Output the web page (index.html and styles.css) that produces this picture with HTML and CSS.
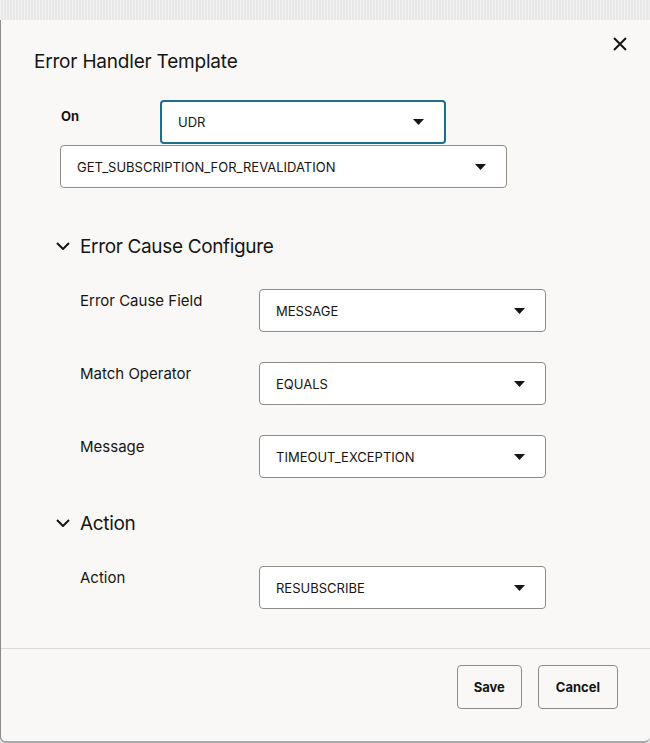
FILE: index.html
```html
<!DOCTYPE html>
<html lang="en">
<head>
<meta charset="utf-8">
<title>Error Handler Template</title>
<link rel="stylesheet" href="styles.css">
</head>
<body>
<div class="backdrop"></div>
<div class="dialog">
  <header class="dialog-header">
    <h1 class="dialog-title">Error Handler Template</h1>
    <button class="close-btn" aria-label="Close">
      <svg width="16" height="16" viewBox="0 0 16 16"><path d="M2 2L14 14M14 2L2 14" stroke="#161513" stroke-width="2" fill="none"/></svg>
    </button>
  </header>
  <div class="dialog-body">
    <div class="on-row">
      <span class="on-label">On</span>
      <div class="select select-focus select-udr">
        <span class="select-value">UDR</span>
        <svg class="caret" width="11" height="6" viewBox="0 0 11 6"><path d="M0 0H11L5.5 6Z" fill="#161513"/></svg>
      </div>
    </div>
    <div class="select select-op">
      <span class="select-value">GET_SUBSCRIPTION_FOR_REVALIDATION</span>
      <svg class="caret" width="11" height="6" viewBox="0 0 11 6"><path d="M0 0H11L5.5 6Z" fill="#161513"/></svg>
    </div>

    <section class="section section-cause">
      <div class="section-head">
        <svg class="chevron" width="14" height="8" viewBox="0 0 14 8"><path d="M1 1L7 7L13 1" stroke="#161513" stroke-width="2" fill="none"/></svg>
        <h2 class="section-title">Error Cause Configure</h2>
      </div>
      <div class="field-row">
        <span class="field-label">Error Cause Field</span>
        <div class="select select-field">
          <span class="select-value">MESSAGE</span>
          <svg class="caret" width="11" height="6" viewBox="0 0 11 6"><path d="M0 0H11L5.5 6Z" fill="#161513"/></svg>
        </div>
      </div>
      <div class="field-row">
        <span class="field-label">Match Operator</span>
        <div class="select select-field">
          <span class="select-value">EQUALS</span>
          <svg class="caret" width="11" height="6" viewBox="0 0 11 6"><path d="M0 0H11L5.5 6Z" fill="#161513"/></svg>
        </div>
      </div>
      <div class="field-row">
        <span class="field-label">Message</span>
        <div class="select select-field">
          <span class="select-value">TIMEOUT_EXCEPTION</span>
          <svg class="caret" width="11" height="6" viewBox="0 0 11 6"><path d="M0 0H11L5.5 6Z" fill="#161513"/></svg>
        </div>
      </div>
    </section>

    <section class="section section-action">
      <div class="section-head">
        <svg class="chevron" width="14" height="8" viewBox="0 0 14 8"><path d="M1 1L7 7L13 1" stroke="#161513" stroke-width="2" fill="none"/></svg>
        <h2 class="section-title">Action</h2>
      </div>
      <div class="field-row">
        <span class="field-label">Action</span>
        <div class="select select-field">
          <span class="select-value">RESUBSCRIBE</span>
          <svg class="caret" width="11" height="6" viewBox="0 0 11 6"><path d="M0 0H11L5.5 6Z" fill="#161513"/></svg>
        </div>
      </div>
    </section>
  </div>
  <footer class="dialog-footer">
    <button class="btn btn-save">Save</button>
    <button class="btn">Cancel</button>
  </footer>
</div>
</body>
</html>
```
FILE: styles.css
```css
* { box-sizing: border-box; }
html, body { margin: 0; padding: 0; }
body {
  width: 650px;
  height: 743px;
  overflow: hidden;
  background: #e4e4e4;
  font-family: Inter, "Noto Sans", "Liberation Sans", sans-serif;
  color: #161513;
}
.backdrop {
  height: 20px;
  background-color: #e8e8e8;
  background-image: repeating-linear-gradient(90deg, rgba(255,255,255,0.45) 0 1px, transparent 1px 3px);
}
.dialog {
  height: 723px;
  background: #f9f8f6;
  border-left: 1px solid #8a8a8a;
  border-bottom: 2px solid #a9a9a9;
  border-bottom-left-radius: 6px;
  border-bottom-right-radius: 6px;
  display: flex;
  flex-direction: column;
}
.dialog-header {
  display: flex;
  justify-content: space-between;
  align-items: flex-start;
  padding: 16px 22px 0 33px;
}
.dialog-title {
  margin: 9px 0 0 0;
  font-size: 19px;
  font-weight: 400;
  line-height: 34px;
  letter-spacing: -0.2px;
}
.close-btn {
  border: 0;
  background: transparent;
  padding: 0;
  width: 16px;
  height: 16px;
  display: flex;
}
.dialog-body {
  flex: 1;
  padding: 21px 0 0 0;
}
.on-row {
  display: flex;
  align-items: flex-start;
  margin-left: 60px;
}
.on-label {
  width: 99px;
  font-size: 13px;
  font-weight: 700;
  margin-top: 8px;
}
.select {
  display: flex;
  align-items: center;
  justify-content: space-between;
  background: #fff;
  border: 1px solid #8f8c88;
  border-radius: 4px;
  font-size: 13px;
}
.select-focus {
  border: 2px solid #1e6f8c;
}
.select-udr {
  width: 286px;
  height: 44px;
  padding: 0 20px 0 16px;
}
.select-op {
  width: 447px;
  height: 43px;
  margin: 1px 0 0 59px;
  padding: 0 20px 0 16px;
}
.section { margin-left: 55px; }
.section-cause { margin-top: 46px; }
.section-action { margin-top: 33px; }
.section-head {
  display: flex;
  align-items: center;
  height: 24px;
}
.chevron { margin-right: 10px; }
.section-title {
  margin: 0;
  font-size: 19px;
  font-weight: 400;
  letter-spacing: -0.35px;
}
.field-row {
  display: flex;
  align-items: flex-start;
  margin-left: 24px;
  margin-top: 31px;
}
.field-row + .field-row { margin-top: 30px; }
.field-label {
  width: 179px;
  font-size: 15px;
  margin-top: 2px;
}
.select-field {
  width: 287px;
  height: 43px;
  padding: 0 20px 0 16px;
}
.dialog-footer {
  border-top: 1px solid #dcdad7;
  height: 93px;
  display: flex;
  justify-content: flex-end;
  align-items: flex-start;
  gap: 16px;
  padding: 16px 32px 0 0;
}
.btn {
  font-family: inherit;
  font-size: 13px;
  font-weight: 700;
  color: #161513;
  background: #f9f8f6;
  border: 1px solid #8f8c88;
  border-radius: 4px;
  height: 44px;
  padding: 0 17px;
}
.btn-save { padding: 0 16px; }
```
